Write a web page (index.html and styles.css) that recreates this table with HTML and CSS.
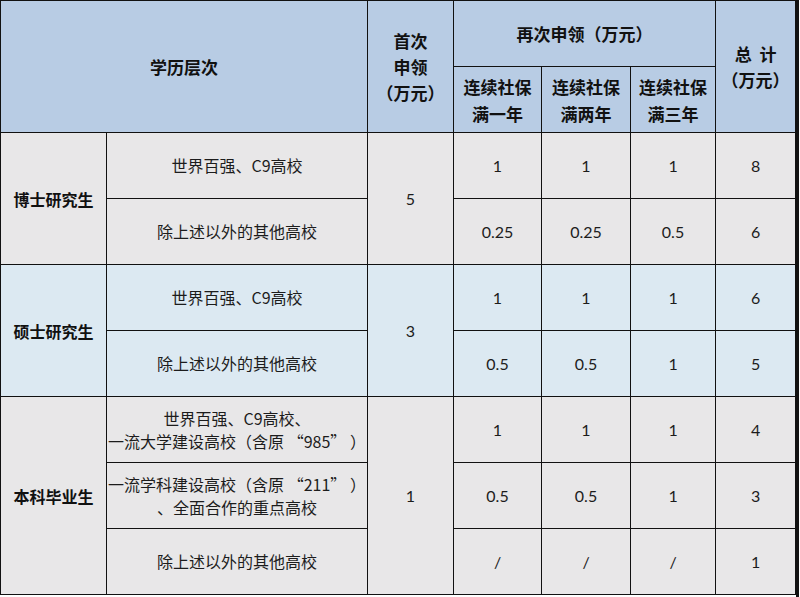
FILE: index.html
```html
<!DOCTYPE html>
<html lang="zh-CN">
<head>
<meta charset="utf-8">
<link rel="stylesheet" href="styles.css">
</head>
<body>
<div class="frame">
<table class="grid">
  <colgroup>
    <col class="c1"><col class="c2"><col class="c3"><col class="c4"><col class="c5"><col class="c6"><col class="c7">
  </colgroup>
  <thead>
    <tr class="h1">
      <th colspan="2" rowspan="2">学历层次</th>
      <th rowspan="2" class="first">首次<br>申领<br>（万元）</th>
      <th colspan="3">再次申领（万元）</th>
      <th rowspan="2" class="total">总&nbsp;&nbsp;计<br>（万元）</th>
    </tr>
    <tr class="h2">
      <th>连续社保<br>满一年</th>
      <th>连续社保<br>满两年</th>
      <th>连续社保<br>满三年</th>
    </tr>
  </thead>
  <tbody>
    <tr class="grey">
      <td rowspan="2" class="lvl">博士研究生</td>
      <td class="txt">世界百强、C9高校</td>
      <td rowspan="2" class="num">5</td>
      <td class="num">1</td><td class="num">1</td><td class="num">1</td><td class="num">8</td>
    </tr>
    <tr class="grey">
      <td class="txt">除上述以外的其他高校</td>
      <td class="num">0.25</td><td class="num">0.25</td><td class="num">0.5</td><td class="num">6</td>
    </tr>
    <tr class="blue">
      <td rowspan="2" class="lvl">硕士研究生</td>
      <td class="txt">世界百强、C9高校</td>
      <td rowspan="2" class="num">3</td>
      <td class="num">1</td><td class="num">1</td><td class="num">1</td><td class="num">6</td>
    </tr>
    <tr class="blue">
      <td class="txt">除上述以外的其他高校</td>
      <td class="num">0.5</td><td class="num">0.5</td><td class="num">1</td><td class="num">5</td>
    </tr>
    <tr class="grey">
      <td rowspan="3" class="lvl">本科毕业生</td>
      <td class="txt two">世界百强、C9高校、<br>一流大学建设高校（含原 “985” ）</td>
      <td rowspan="3" class="num">1</td>
      <td class="num">1</td><td class="num">1</td><td class="num">1</td><td class="num">4</td>
    </tr>
    <tr class="grey">
      <td class="txt two">一流学科建设高校（含原 “211” ）<br>、全面合作的重点高校</td>
      <td class="num">0.5</td><td class="num">0.5</td><td class="num">1</td><td class="num">3</td>
    </tr>
    <tr class="grey">
      <td class="txt">除上述以外的其他高校</td>
      <td class="num">/</td><td class="num">/</td><td class="num">/</td><td class="num">1</td>
    </tr>
  </tbody>
</table>
</div>
</body>
</html>
```

FILE: styles.css
```css
html, body {
  margin: 0;
  padding: 0;
  background: #ffffff;
}

.frame {
  width: 800px;
  height: 597px;
  position: relative;
  overflow: hidden;
  background: #ffffff;
}

.frame::after {
  content: "";
  position: absolute;
  top: 0;
  right: 1px;
  width: 3px;
  height: 597px;
  background: #111;
}

.grid {
  border-collapse: collapse;
  table-layout: fixed;
  width: 795px;
  font-family: "Noto Sans CJK SC", "Noto Sans", sans-serif;
  color: #1a1a1a;
}

.c1 { width: 106px; }
.c2 { width: 261px; }
.c3 { width: 86px; }
.c4 { width: 88px; }
.c5 { width: 89px; }
.c6 { width: 85px; }
.c7 { width: 80px; }

.grid th,
.grid td {
  border: 1px solid #111;
  padding: 0;
  text-align: center;
  vertical-align: middle;
}

.grid th {
  background: #b8cce4;
  font-weight: bold;
  font-size: 17px;
  line-height: 26px;
  color: #111;
}

.h1 { height: 66px; }
.h2 { height: 66px; }

.h2 th { line-height: 27px; }

.grid tbody tr { height: 66px; }

.grey td { background: #e8e7e8; }
.blue td { background: #dce9f2; }

.lvl {
  font-weight: bold;
  font-size: 16px;
  color: #111;
}

.txt {
  font-size: 16px;
  line-height: 23px;
  color: #1c1c1c;
}

.num {
  font-family: "Lato", "Liberation Sans", sans-serif;
  font-size: 16px;
  color: #1c1c1c;
}
```
